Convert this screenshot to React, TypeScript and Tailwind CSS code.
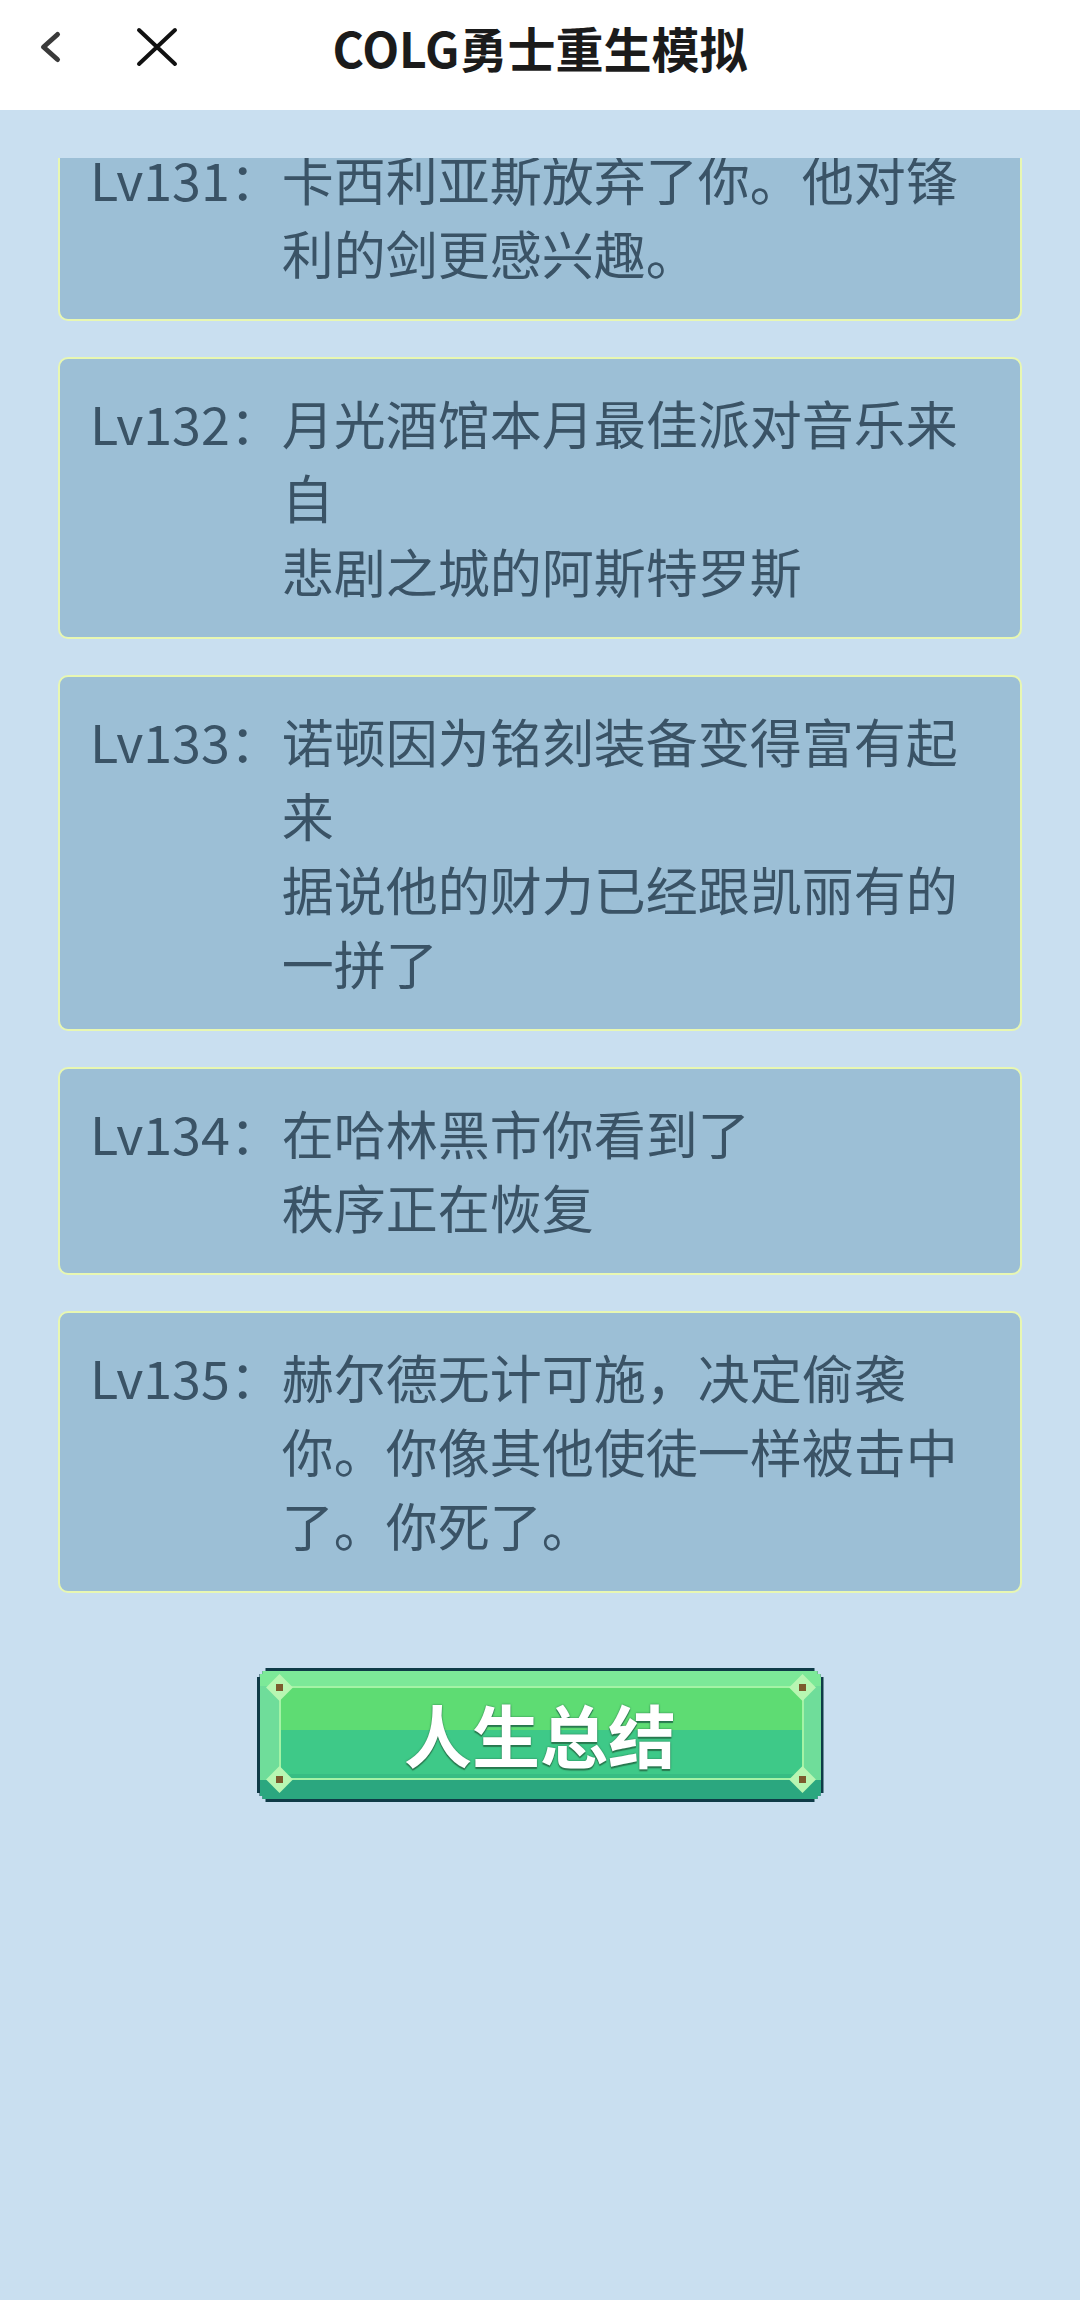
import React from "react";

interface LogEntry {
    level: number;
    text: string;
}

const entries: LogEntry[] = [
    { level: 131, text: "卡西利亚斯放弃了你。他对锋利的剑更感兴趣。" },
    { level: 132, text: "月光酒馆本月最佳派对音乐来自\n悲剧之城的阿斯特罗斯" },
    { level: 133, text: "诺顿因为铭刻装备变得富有起来\n据说他的财力已经跟凯丽有的一拼了" },
    { level: 134, text: "在哈林黑市你看到了\n秩序正在恢复" },
    { level: 135, text: "赫尔德无计可施，决定偷袭你。你像其他使徒一样被击中了。你死了。" },
];

const FONT = "font-['Noto_Sans_CJK_SC','Noto_Sans',sans-serif]";

const LogCard: React.FC<{ entry: LogEntry }> = ({ entry }) => (
    <div className="flex rounded-[10px] border-2 border-[#e8f7b2] bg-[#9cbfd6] pl-[30px] pr-[34px] pt-[27px] pb-[29px] text-[52px] leading-[74px] text-[#3a5366]">
        <span className="shrink-0">Lv{entry.level}：</span>
        <span className="min-w-0 flex-1 whitespace-pre-line">{entry.text}</span>
    </div>
);

// light gem with a brown rivet on each corner of the button frame
const Rivet: React.FC<{ className: string }> = ({ className }) => (
    <div className={`absolute flex h-[28px] w-[28px] items-center justify-center ${className}`}>
        <div className="absolute h-[19px] w-[19px] rotate-45 bg-[#b8f6b2]" />
        <div className="relative h-[7px] w-[7px] bg-[#7d5b2e]" />
    </div>
);

const SummaryButton: React.FC = () => (
    <button className="h-[134px] w-[567px] bg-[#0f3b47] p-[3px] [clip-path:polygon(9px_0,calc(100%_-_9px)_0,calc(100%_-_9px)_3px,calc(100%_-_6px)_3px,calc(100%_-_6px)_6px,calc(100%_-_3px)_6px,calc(100%_-_3px)_9px,100%_9px,100%_calc(100%_-_9px),calc(100%_-_3px)_calc(100%_-_9px),calc(100%_-_3px)_calc(100%_-_6px),calc(100%_-_6px)_calc(100%_-_6px),calc(100%_-_6px)_calc(100%_-_3px),calc(100%_-_9px)_calc(100%_-_3px),calc(100%_-_9px)_100%,9px_100%,9px_calc(100%_-_3px),6px_calc(100%_-_3px),6px_calc(100%_-_6px),3px_calc(100%_-_6px),3px_calc(100%_-_9px),0_calc(100%_-_9px),0_9px,3px_9px,3px_6px,6px_6px,6px_3px,9px_3px)]">
        <div className="relative flex h-full w-full flex-col">
            <div className="h-[15px] bg-[#7ce998]" />
            <div className="flex flex-1">
                <div className="w-[19px] bg-[#6fdd9a]" />
                <div className="flex flex-1 flex-col">
                    <div className="flex-1 bg-[#5edc73]" />
                    <div className="flex-1 bg-[#3ec988]" />
                    <div className="h-[6px] bg-[#37bd83]" />
                </div>
                <div className="w-[17px] bg-[#6fdd9a]" />
            </div>
            <div className="h-[19px] bg-[#2ba77f]" />

            <div className="absolute left-[19px] right-[17px] top-[15px] bottom-[19px] border-2 border-[#a4f3a6]" />
            <Rivet className="left-[6px] top-[2px]" />
            <Rivet className="right-[4px] top-[2px]" />
            <Rivet className="left-[6px] bottom-[6px]" />
            <Rivet className="right-[4px] bottom-[6px]" />

            <span className={`absolute inset-0 flex items-center justify-center pb-[2px] text-[68px] font-bold leading-none text-white [text-shadow:0_0_2px_#25704a,0_2px_1px_#2a7a50] ${FONT}`}>
                人生总结
            </span>
        </div>
    </button>
);

export default function App() {
    return (
        <div className={`min-h-[2300px] w-[1080px] bg-[#c9dff0] ${FONT}`}>
            {/* Top bar */}
            <header className="grid h-[110px] grid-cols-[1fr_auto_1fr] items-center bg-white pb-[16px]">
                <div className="flex items-center pl-[38px]">
                    <svg width="24" height="34" viewBox="0 0 24 34" fill="none">
                        <polyline
                            points="19.5,4.5 5.5,17 19.5,29.5"
                            stroke="#3a3a3a"
                            strokeWidth="5"
                            strokeLinecap="round"
                            strokeLinejoin="round"
                        />
                    </svg>
                    <svg className="ml-[73px]" width="44" height="42" viewBox="0 0 44 42" fill="none">
                        <path d="M4 4 L40 38 M40 4 L4 38" stroke="#111" strokeWidth="4" strokeLinecap="round" />
                    </svg>
                </div>
                <h1 className="text-[48px] font-bold leading-none text-[#1b1b1b]">COLG勇士重生模拟</h1>
                <div />
            </header>

            {/* Scrolled log */}
            <main className="pt-[48px]">
                <div className="h-[2142px] overflow-hidden">
                    <div className="-mt-[45px] flex flex-col gap-[36px] px-[58px]">
                        {entries.map((entry) => (
                            <LogCard key={entry.level} entry={entry} />
                        ))}
                    </div>
                    <div className="mt-[75px] flex justify-center">
                        <SummaryButton />
                    </div>
                </div>
            </main>
        </div>
    );
}
